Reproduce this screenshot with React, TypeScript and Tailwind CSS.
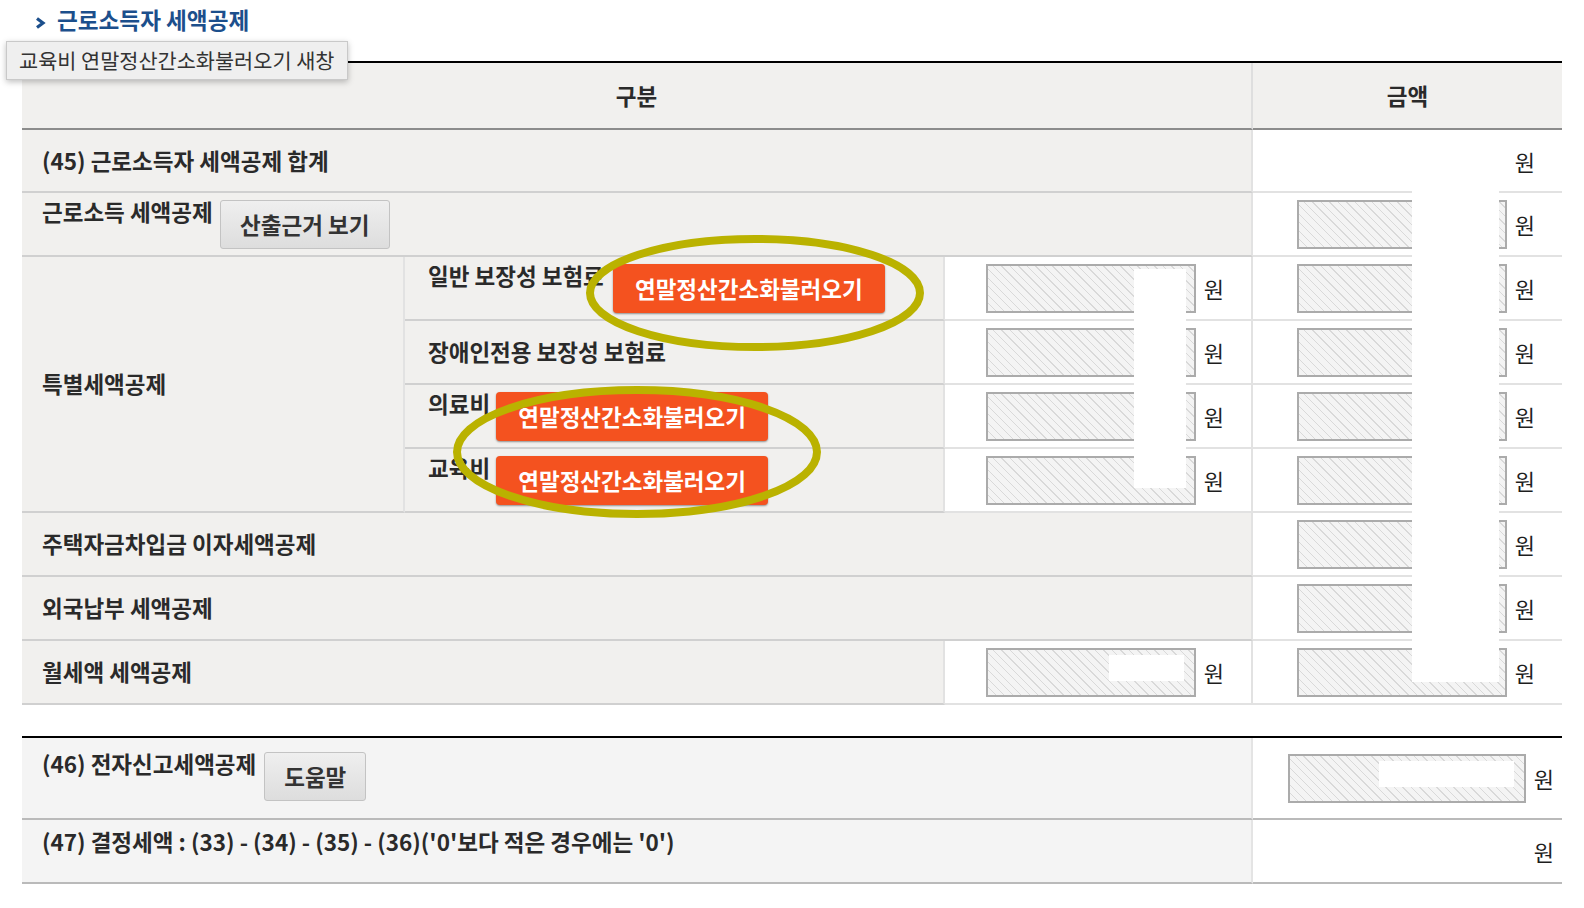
import React from 'react'

const hatch =
  'bg-[repeating-linear-gradient(45deg,#f4f4f4_0px,#f4f4f4_5px,#d9d9d9_5px,#d9d9d9_6px)]'

function Field({ wide }: { wide?: boolean }) {
  return (
    <div
      className={`${wide ? 'w-[238px]' : 'w-[210px]'} h-[49px] shrink-0 border-2 border-[#ababab] ${hatch}`}
    />
  )
}

function Won() {
  return <span className="font-normal text-[#1e1e1e] text-[22px] leading-none">원</span>
}

function Amount({ last }: { last?: boolean }) {
  return (
    <div
      className={`bg-white border-b-2 border-b-[#e2e2e2] ${last ? '' : 'border-r-2 border-r-[#e2e2e2]'} flex items-center justify-end gap-2 pr-[27px]`}
    >
      <Field />
      <Won />
    </div>
  )
}

function LoadButton({ ml }: { ml: string }) {
  return (
    <button className={`${ml} w-[272px] h-[49px] shrink-0 rounded-[4px] bg-[#f4521f] text-white font-bold shadow-[0_1px_2px_rgba(0,0,0,0.4)]`}>
      연말정산간소화불러오기
    </button>
  )
}

function GrayButton({ label, w }: { label: string; w: string }) {
  return (
    <button
      className={`${w} h-[49px] shrink-0 rounded-[3px] border border-[#c3c3c3] bg-gradient-to-b from-[#efefef] to-[#dddddd] text-[#333] font-semibold`}
    >
      {label}
    </button>
  )
}

const gray = 'bg-[#f1f0ee] border-b-2 border-b-[#d0d0d0] border-r-2 border-r-[#e2e2e2]'

export default function App() {
  return (
    <div className="relative w-[1584px] h-[908px] bg-white overflow-hidden font-['Noto_Sans_CJK_KR','Noto_Sans',sans-serif] text-[22.5px] text-[#2a2a2a]">
      {/* title */}
      <div className="h-[61px] pl-[35px] pt-[5px] flex items-start gap-[11px]">
        <svg width="11" height="12" viewBox="0 0 11 12" className="mt-[12px]">
          <path d="M2 1.5 L8 6 L2 10.5" fill="none" stroke="#1c4f8c" strokeWidth="3.2" />
        </svg>
        <h2 className="text-[22.6px] leading-[30px] font-bold text-[#1c4f8c]">근로소득자 세액공제</h2>
      </div>

      {/* main table */}
      <div className="ml-[22px] w-[1540px] border-t-2 border-black grid grid-cols-[383px_540px_308px_309px] grid-rows-[67px_63px_64px_64px_64px_64px_64px_64px_64px_64px] font-bold">
        <div className="col-span-3 bg-[#f1f0ee] border-b-2 border-b-[#8c8c8c] border-r-2 border-r-[#dedede] flex items-center justify-center">
          구분
        </div>
        <div className="bg-[#f1f0ee] border-b-2 border-b-[#8c8c8c] flex items-center justify-center">금액</div>

        <div className={`col-span-3 ${gray} flex items-center pl-[20px]`}>(45) 근로소득자 세액공제 합계</div>
        <div className="bg-white border-b-2 border-b-[#e2e2e2] flex items-center justify-end pr-[27px]">
          <Won />
        </div>

        <div className={`col-span-3 ${gray} flex items-start pl-[20px] pt-[7px]`}>
          <span className="mt-[-2px] leading-[26px]">근로소득 세액공제</span>
          <GrayButton label="산출근거 보기" w="w-[170px] ml-[7px]" />
        </div>
        <Amount last />

        <div className={`row-span-4 ${gray} flex items-center pl-[20px]`}>특별세액공제</div>
        <div className={`${gray} flex items-start pl-[23px] pt-[7px]`}>
          <span className="mt-[-2px] leading-[26px]">일반 보장성 보험료</span>
          <LoadButton ml="ml-[9px]" />
        </div>
        <Amount />
        <Amount last />

        <div className={`${gray} flex items-center pl-[23px]`}>장애인전용 보장성 보험료</div>
        <Amount />
        <Amount last />

        <div className={`${gray} flex items-start pl-[23px] pt-[7px]`}>
          <span className="mt-[-2px] leading-[26px]">의료비</span>
          <LoadButton ml="ml-[6px]" />
        </div>
        <Amount />
        <Amount last />

        <div className={`${gray} flex items-start pl-[23px] pt-[7px]`}>
          <span className="mt-[-2px] leading-[26px]">교육비</span>
          <LoadButton ml="ml-[6px]" />
        </div>
        <Amount />
        <Amount last />

        <div className={`col-span-3 ${gray} flex items-center pl-[20px]`}>주택자금차입금 이자세액공제</div>
        <Amount last />

        <div className={`col-span-3 ${gray} flex items-center pl-[20px]`}>외국납부 세액공제</div>
        <Amount last />

        <div className={`col-span-2 ${gray} flex items-center pl-[20px]`}>월세액 세액공제</div>
        <Amount />
        <Amount last />
      </div>

      {/* second table */}
      <div className="mt-[31px] ml-[22px] w-[1540px] border-t-2 border-black grid grid-cols-[1231px_309px] grid-rows-[82px_64px] font-bold">
        <div className="bg-[#f4f4f4] border-b-2 border-b-[#bababa] border-r-2 border-r-[#e4e4e4] flex items-start pl-[20px] pt-[14px]">
          <span className="mt-[-2px] leading-[26px]">(46) 전자신고세액공제</span>
          <GrayButton label="도움말" w="w-[102px] ml-[8px]" />
        </div>
        <div className="bg-white border-b-2 border-b-[#bababa] flex items-center justify-end gap-2 pr-[8px]">
          <Field wide />
          <Won />
        </div>
        <div className="bg-[#f4f4f4] border-b-2 border-b-[#bababa] border-r-2 border-r-[#e4e4e4] flex items-start pl-[20px] pt-[8px]">
          <span className="leading-[26px]">(47) 결정세액 : (33) - (34) - (35) - (36)('0'보다 적은 경우에는 '0')</span>
        </div>
        <div className="bg-white border-b-2 border-b-[#bababa] flex items-center justify-end pr-[8px]">
          <Won />
        </div>
      </div>

      {/* redaction blocks */}
      <div className="absolute left-[1412px] top-[191px] w-[87px] h-[491px] bg-white" />
      <div className="absolute left-[1134px] top-[269px] w-[52px] h-[219px] bg-white" />
      <div className="absolute left-[1109px] top-[655px] w-[75px] h-[26px] bg-white" />
      <div className="absolute left-[1379px] top-[761px] w-[135px] h-[26px] bg-white" />

      {/* tooltip */}
      <div className="absolute left-[6px] top-[41px] w-[342px] h-[39px] bg-[#efefef] border border-[#c9c9c9] shadow-[0_2px_6px_rgba(0,0,0,0.25)] flex items-center pl-[12px] text-[20.8px] text-[#333] font-normal">
        교육비 연말정산간소화불러오기 새창
      </div>

      {/* annotation marks */}
      <svg className="absolute left-0 top-0 pointer-events-none" width="1584" height="908">
        <ellipse cx="755" cy="293" rx="165" ry="54" fill="none" stroke="#bab200" strokeWidth="8" />
        <ellipse cx="637" cy="452" rx="180" ry="62" fill="none" stroke="#bab200" strokeWidth="8" />
      </svg>
    </div>
  )
}
